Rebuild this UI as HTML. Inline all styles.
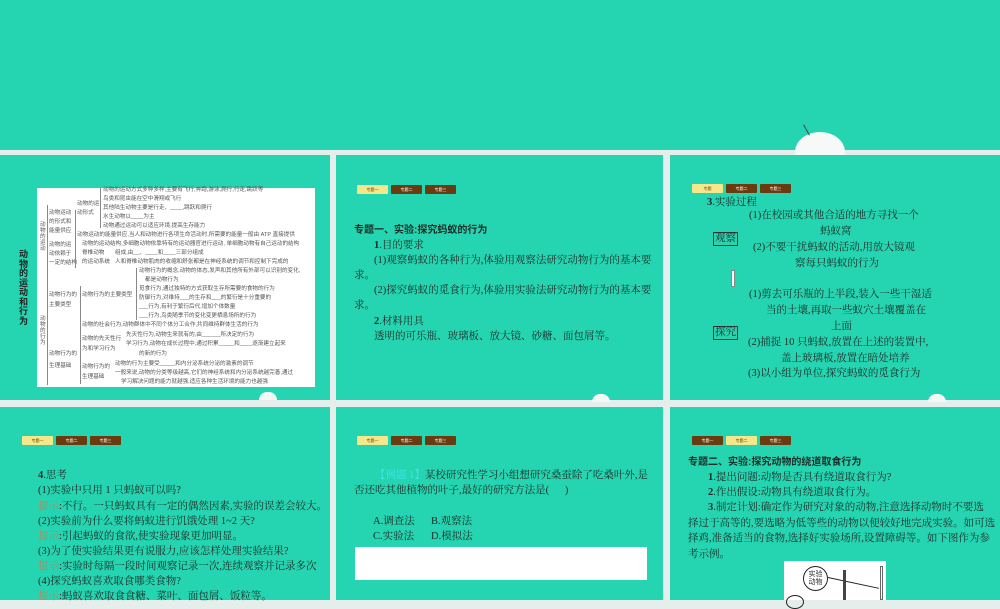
<!DOCTYPE html>
<html><head><meta charset="utf-8"><style>
*{margin:0;padding:0;box-sizing:border-box}
body{width:1000px;height:600px;overflow:hidden;background:#e6eeeb;position:relative;font-family:"Liberation Serif","Noto Serif CJK SC","Noto Sans CJK SC",serif;color:#1e2b26}
.s{position:absolute;background:#25d4b1;overflow:hidden}
.a{position:absolute;white-space:nowrap;font-size:10.5px;line-height:14px}
.tab{position:absolute;height:9px;width:31px;border-radius:1px;font-size:4px;line-height:9px;text-align:center;color:#fff;background:#6b3a0e;font-family:"Liberation Sans","Noto Sans CJK SC",sans-serif}
.tab.y{background:#f6e78a;color:#6b3a0e}
.t{position:absolute;white-space:nowrap;font-size:5.6px;line-height:7px;color:#555;font-family:"Liberation Sans","Noto Sans CJK SC",sans-serif}
.h{color:#b6875f}
.bump{position:absolute;width:18px;height:8px;border-radius:9px 9px 0 0;background:#f3f7f6;}
</style></head><body>
<div class="s" style="left:0;top:0;width:1000px;height:150px"></div>
<div style="position:absolute;left:795px;top:132px;width:50px;height:40px;border-radius:50%;background:#f7f9f8"></div>
<div style="position:absolute;left:806px;top:124px;width:1px;height:12px;background:#444;transform:rotate(-30deg)"></div>

<!-- slide 1 -->
<div class="s" style="left:0;top:155px;width:330px;height:245px"></div>
<div style="position:absolute;left:37px;top:188px;width:278px;height:199px;background:#fff"></div>
<div class="a" style="left:19px;top:250px;width:10px;font-size:9px;line-height:9.5px;white-space:normal;font-weight:bold;color:#222;font-family:'Liberation Sans','Noto Sans CJK SC',sans-serif">动物的运动和行为</div>
<div class="t" style="left:40px;top:222px;width:6px;white-space:normal;line-height:6px">动物的运动</div>
<div class="t" style="left:40px;top:316px;width:6px;white-space:normal;line-height:6px">动物的行为</div>
<div class="t" style="left:49px;top:210px">动物运动</div>
<div class="t" style="left:49px;top:219px">的形式和</div>
<div class="t" style="left:49px;top:228px">能量供应</div>
<div class="t" style="left:77px;top:201px">动物的运</div>
<div class="t" style="left:77px;top:210px">动形式</div>
<div class="t" style="left:49px;top:242px">动物的运</div>
<div class="t" style="left:49px;top:251px">动依赖于</div>
<div class="t" style="left:49px;top:260px">一定的结构</div>
<div class="t" style="left:49px;top:292px">动物行为的</div>
<div class="t" style="left:49px;top:302px">主要类型</div>
<div class="t" style="left:82px;top:292px">动物行为的主要类型</div>
<div class="t" style="left:82px;top:336px">动物的先天性行</div>
<div class="t" style="left:82px;top:346px">为和学习行为</div>
<div class="t" style="left:49px;top:351px">动物行为的</div>
<div class="t" style="left:49px;top:363px">生理基础</div>
<div class="t" style="left:82px;top:364px">动物行为的</div>
<div class="t" style="left:82px;top:374px">生理基础</div>
<div class="t" style="left:103px;top:187px">动物的运动方式多种多样,主要有飞行,奔跑,游泳,爬行,行走,跳跃等</div>
<div class="t" style="left:103px;top:196px">鸟类和昆虫能在空中滑翔或飞行</div>
<div class="t" style="left:103px;top:205px">其他陆生动物主要是行走、____,跳跃和爬行</div>
<div class="t" style="left:103px;top:214px">水生动物以____为主</div>
<div class="t" style="left:103px;top:223px">动物通过运动可以适应环境,提高生存能力</div>
<div class="t" style="left:77px;top:232px">动物运动的能量供应,当人和动物进行各项生命活动时,所需要的能量一般由 ATP 直接提供</div>
<div class="t" style="left:82px;top:241px">动物的运动结构,多细胞动物依靠特有的运动器官进行运动, 单细胞动物有自己运动的结构</div>
<div class="t" style="left:82px;top:250px">脊椎动物</div>
<div class="t" style="left:115px;top:250px">组成,由__、____和____三部分组成</div>
<div class="t" style="left:82px;top:259px">的运动系统</div>
<div class="t" style="left:115px;top:259px">人和脊椎动物肌肉的收缩和舒张都是在神经系统的调节和控制下完成的</div>
<div class="t" style="left:139px;top:268px">动物行为的概念,动物的体态,发声和其他所有外部可以识别的变化,</div>
<div class="t" style="left:145px;top:277px">都是动物行为</div>
<div class="t" style="left:139px;top:286px">觅食行为,通过独特的方式获取生存所需要的食物的行为</div>
<div class="t" style="left:139px;top:295px">防御行为,对维持___的生存和___的繁衍是十分重要的</div>
<div class="t" style="left:139px;top:304px">___行为,有利于繁衍后代,增加个体数量</div>
<div class="t" style="left:139px;top:313px">___行为,鸟类随季节的变化变更栖息场所的行为</div>
<div class="t" style="left:82px;top:322px">动物的社会行为,动物群体中不同个体分工合作,共同维持群体生活的行为</div>
<div class="t" style="left:126px;top:332px">先天性行为,动物生来就有的,由______所决定的行为</div>
<div class="t" style="left:126px;top:341px">学习行为,动物在成长过程中,通过积累_____和____逐渐建立起来</div>
<div class="t" style="left:139px;top:351px">的新的行为</div>
<div class="t" style="left:115px;top:361px">动物的行为主要受_____和内分泌系统分泌的激素的调节</div>
<div class="t" style="left:115px;top:370px">一般来说,动物的分类等级越高,它们的神经系统和内分泌系统越完善,通过</div>
<div class="t" style="left:121px;top:379px">学习解决问题的能力就越强,适应各种生活环境的能力也越强</div>
<div style="position:absolute;left:47px;top:205px;width:1px;height:180px;background:#888"></div>
<div style="position:absolute;left:75px;top:210px;width:1px;height:58px;background:#888"></div>
<div style="position:absolute;left:100px;top:188px;width:1px;height:40px;background:#888"></div>
<div style="position:absolute;left:80px;top:286px;width:1px;height:98px;background:#888"></div>
<div style="position:absolute;left:136px;top:268px;width:1px;height:52px;background:#888"></div>
<div class="bump" style="left:259px;top:392px"></div>

<!-- slide 2 -->
<div class="s" style="left:336px;top:155px;width:327px;height:245px"></div>
<div class="tab y" style="left:357px;top:185px">专题一</div>
<div class="tab" style="left:391px;top:185px">专题二</div>
<div class="tab" style="left:425px;top:185px">专题三</div>
<div class="a" style="left:354px;top:224px;font-weight:bold;font-family:'Liberation Sans','Noto Sans CJK SC',sans-serif;font-size:10px">专题一、实验:探究蚂蚁的行为</div>
<div class="a" style="left:374px;top:239px"><b>1</b>.目的要求</div>
<div class="a" style="left:374px;top:254px">(1)观察蚂蚁的各种行为,体验用观察法研究动物行为的基本要</div>
<div class="a" style="left:354px;top:269px">求。</div>
<div class="a" style="left:374px;top:284px">(2)探究蚂蚁的觅食行为,体验用实验法研究动物行为的基本要</div>
<div class="a" style="left:354px;top:299px">求。</div>
<div class="a" style="left:374px;top:315px"><b>2</b>.材料用具</div>
<div class="a" style="left:374px;top:330px">透明的可乐瓶、玻璃板、放大镜、砂糖、面包屑等。</div>
<div class="bump" style="left:592px;top:394px"></div>

<!-- slide 3 -->
<div class="s" style="left:670px;top:155px;width:330px;height:245px"></div>
<div class="tab y" style="left:692px;top:184px">专题</div>
<div class="tab" style="left:726px;top:184px">专题二</div>
<div class="tab" style="left:760px;top:184px">专题三</div>
<div class="a" style="left:707px;top:196px"><b>3</b>.实验过程</div>
<div class="a" style="left:713px;top:232px;border:1px solid #333;padding:0 1px;line-height:12px">观察</div>
<div class="a" style="left:713px;top:326px;border:1px solid #333;padding:0 1px;line-height:12px">探究</div>
<div style="position:absolute;left:731px;top:270px;width:4px;height:17px;background:#fff;border:1px solid #888"></div>
<div class="a" style="left:749px;top:209px">(1)在校园或其他合适的地方寻找一个</div>
<div class="a" style="left:820px;top:225px">蚂蚁窝</div>
<div class="a" style="left:753px;top:241px">(2)不要干扰蚂蚁的活动,用放大镜观</div>
<div class="a" style="left:795px;top:257px">察每只蚂蚁的行为</div>
<div class="a" style="left:749px;top:288px">(1)剪去可乐瓶的上半段,装入一些干湿适</div>
<div class="a" style="left:766px;top:304px">当的土壤,再取一些蚁穴土壤覆盖在</div>
<div class="a" style="left:831px;top:320px">上面</div>
<div class="a" style="left:748px;top:336px">(2)捕捉 10 只蚂蚁,放置在上述的装置中,</div>
<div class="a" style="left:781px;top:352px">盖上玻璃板,放置在暗处培养</div>
<div class="a" style="left:748px;top:367px">(3)以小组为单位,探究蚂蚁的觅食行为</div>
<div class="bump" style="left:928px;top:394px"></div>

<!-- slide 4 -->
<div class="s" style="left:0;top:407px;width:330px;height:193px"></div>
<div class="tab y" style="left:22px;top:436px">专题一</div>
<div class="tab" style="left:56px;top:436px">专题二</div>
<div class="tab" style="left:90px;top:436px">专题三</div>
<div class="a" style="left:38px;top:469px"><b>4</b>.思考</div>
<div class="a" style="left:38px;top:484px">(1)实验中只用 1 只蚂蚁可以吗?</div>
<div class="a" style="left:38px;top:500px"><span class="h">提示</span>:不行。一只蚂蚁具有一定的偶然因素,实验的误差会较大。</div>
<div class="a" style="left:38px;top:515px">(2)实验前为什么要将蚂蚁进行饥饿处理 1~2 天?</div>
<div class="a" style="left:38px;top:530px"><span class="h">提示</span>:引起蚂蚁的食欲,使实验现象更加明显。</div>
<div class="a" style="left:38px;top:545px">(3)为了使实验结果更有说服力,应该怎样处理实验结果?</div>
<div class="a" style="left:38px;top:560px"><span class="h">提示</span>:实验时每隔一段时间观察记录一次,连续观察并记录多次</div>
<div class="a" style="left:38px;top:575px">(4)探究蚂蚁喜欢取食哪类食物?</div>
<div class="a" style="left:38px;top:590px"><span class="h">提示</span>:蚂蚁喜欢取食食糖、菜叶、面包屑、饭粒等。</div>

<!-- slide 5 -->
<div class="s" style="left:336px;top:407px;width:327px;height:193px"></div>
<div class="tab y" style="left:357px;top:436px">专题一</div>
<div class="tab" style="left:391px;top:436px">专题二</div>
<div class="tab" style="left:425px;top:436px">专题三</div>
<div class="a" style="left:375px;top:469px"><span style="color:#42e6e6">【例题 1】</span>某校研究性学习小组想研究桑蚕除了吃桑叶外,是</div>
<div class="a" style="left:354px;top:484px">否还吃其他植物的叶子,最好的研究方法是(&nbsp;&nbsp;&nbsp;&nbsp;&nbsp;&nbsp;)</div>
<div class="a" style="left:373px;top:515px">A.调查法</div>
<div class="a" style="left:431px;top:515px">B.观察法</div>
<div class="a" style="left:373px;top:530px">C.实验法</div>
<div class="a" style="left:431px;top:530px">D.模拟法</div>
<div style="position:absolute;left:355px;top:547px;width:292px;height:33px;background:#fff"></div>

<!-- slide 6 -->
<div class="s" style="left:670px;top:407px;width:330px;height:193px"></div>
<div class="tab" style="left:692px;top:436px">专题一</div>
<div class="tab y" style="left:726px;top:436px">专题二</div>
<div class="tab" style="left:760px;top:436px">专题三</div>
<div class="a" style="left:688px;top:456px;font-weight:bold;font-family:'Liberation Sans','Noto Sans CJK SC',sans-serif;font-size:10px">专题二、实验:探究动物的绕道取食行为</div>
<div class="a" style="left:708px;top:471px"><b>1</b>.提出问题:动物是否具有绕道取食行为?</div>
<div class="a" style="left:708px;top:486px"><b>2</b>.作出假设:动物具有绕道取食行为。</div>
<div class="a" style="left:708px;top:501px"><b>3</b>.制定计划:确定作为研究对象的动物,注意选择动物时不要选</div>
<div class="a" style="left:688px;top:517px">择过于高等的,要选略为低等些的动物以便较好地完成实验。如可选</div>
<div class="a" style="left:688px;top:532px">择鸡,准备适当的食物,选择好实验场所,设置障碍等。如下图作为参</div>
<div class="a" style="left:688px;top:548px">考示例。</div>
<div style="position:absolute;left:784px;top:561px;width:102px;height:39px;background:#fff"></div>
<div style="position:absolute;left:803px;top:566px;width:25px;height:25px;border:1px solid #222;border-radius:50%;font-size:7px;line-height:8px;text-align:center;padding-top:4px;font-family:'Liberation Sans','Noto Sans CJK SC',sans-serif">实验<br>动物</div>
<div style="position:absolute;left:828px;top:577px;width:52px;height:1px;background:#222;transform:rotate(12deg);transform-origin:left"></div>
<div style="position:absolute;left:843px;top:570px;width:3px;height:30px;background:#444"></div>
<div style="position:absolute;left:880px;top:566px;width:3px;height:34px;border:1px solid #666"></div>
<div style="position:absolute;left:786px;top:595px;width:18px;height:14px;border:1px solid #222;border-radius:50%"></div>
</body></html>
